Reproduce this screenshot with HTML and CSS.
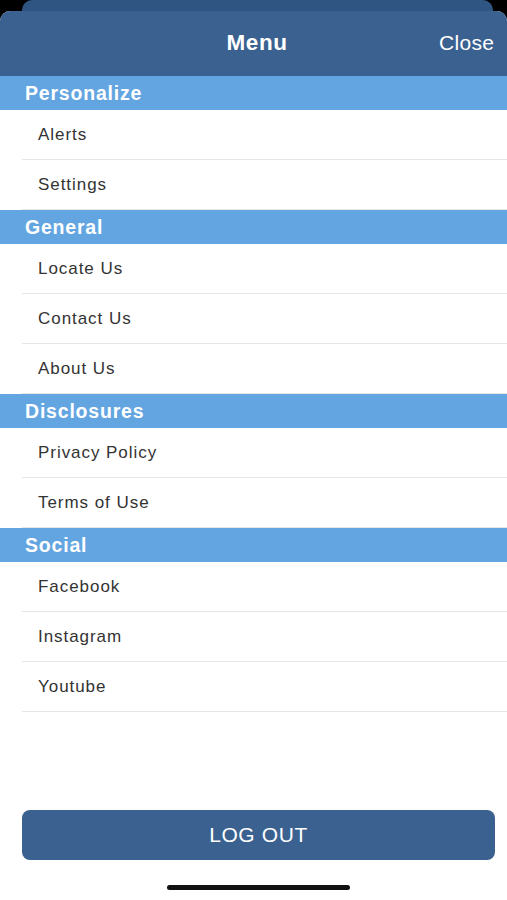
FILE: index.html
```html
<!DOCTYPE html>
<html lang="en">
<head>
<meta charset="utf-8">
<title>Menu</title>
<link rel="stylesheet" href="styles.css">
</head>
<body>
<div class="back-card"></div>
<div class="sheet">
  <header class="topbar">
    <span class="spacer"></span>
    <h1 class="title">Menu</h1>
    <span class="close">Close</span>
  </header>
  <div class="list">
    <div class="section">Personalize</div>
    <div class="row"><span>Alerts</span></div>
    <div class="row"><span>Settings</span></div>
    <div class="section">General</div>
    <div class="row"><span>Locate Us</span></div>
    <div class="row"><span>Contact Us</span></div>
    <div class="row"><span>About Us</span></div>
    <div class="section">Disclosures</div>
    <div class="row"><span>Privacy Policy</span></div>
    <div class="row"><span>Terms of Use</span></div>
    <div class="section">Social</div>
    <div class="row"><span>Facebook</span></div>
    <div class="row"><span>Instagram</span></div>
    <div class="row"><span>Youtube</span></div>
  </div>
  <button class="logout">LOG OUT</button>
  <div class="home-indicator"></div>
</div>
</body>
</html>
```
FILE: styles.css
```css
* { box-sizing: border-box; }
html, body { margin: 0; padding: 0; }
body {
  background: #000;
  width: 507px;
  height: 900px;
  overflow: hidden;
  font-family: "Liberation Sans", Arial, sans-serif;
}
.back-card {
  height: 11px;
  margin: 0 14px 0 22px;
  background: #2f5682;
  border-radius: 10px 10px 0 0;
}
.sheet {
  height: 889px;
  background: #fff;
  border-radius: 10px 10px 0 0;
  overflow: hidden;
  display: flex;
  flex-direction: column;
}
.topbar {
  height: 65px;
  background: #3a6190;
  display: flex;
  align-items: center;
  justify-content: space-between;
  padding: 0 13px 0 13px;
  color: #fff;
}
.spacer { width: 55px; }
.title {
  margin: -1px 0 0 7px;
  font-size: 22.5px;
  font-weight: bold;
  letter-spacing: 0.6px;
}
.close {
  margin-top: -1px;
  font-size: 21px;
  letter-spacing: 0.3px;
  width: 55px;
  text-align: right;
}
.list { display: flex; flex-direction: column; }
.section {
  height: 34px;
  background: #63a5e0;
  color: #fff;
  font-weight: bold;
  font-size: 19.5px;
  letter-spacing: 0.8px;
  padding-left: 25px;
  display: flex;
  align-items: center;
}
.row {
  height: 50px;
  margin-left: 22px;
  padding-left: 16px;
  border-bottom: 1px solid #e6e6e6;
  display: flex;
  align-items: center;
  font-size: 17px;
  letter-spacing: 0.95px;
  color: #333;
}
.logout {
  margin: 98px 12px 0 22px;
  height: 50px;
  border: none;
  border-radius: 8px;
  background: #3a6190;
  color: #fff;
  font-family: "Liberation Sans", Arial, sans-serif;
  font-size: 21px;
  letter-spacing: 0.6px;
}
.home-indicator {
  margin: 25px 0 0 167px;
  width: 183px;
  height: 5px;
  border-radius: 3px;
  background: #111;
}
```
